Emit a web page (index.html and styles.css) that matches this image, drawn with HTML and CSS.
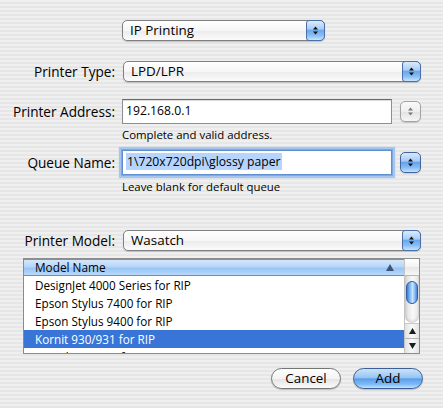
FILE: index.html
```html
<!DOCTYPE html>
<html>
<head>
<meta charset="utf-8">
<title>IP Printing</title>
<link rel="stylesheet" href="styles.css">
</head>
<body>
<div class="dialog">
  <div class="row r1">
    <div class="label"></div>
    <div class="popup popup-ip">
      <span class="popup-text">IP Printing</span>
      <span class="popup-btn"><svg class="arrows" width="5" height="9" viewBox="0 0 5 9"><path d="M2.5 0.5 L5 3.5 H0 Z M0 5.5 H5 L2.5 8.5 Z"/></svg></span>
    </div>
  </div>

  <div class="row r2">
    <div class="label">Printer Type:</div>
    <div class="popup popup-grow">
      <span class="popup-text">LPD/LPR</span>
      <span class="popup-btn"><svg class="arrows" width="5" height="9" viewBox="0 0 5 9"><path d="M2.5 0.5 L5 3.5 H0 Z M0 5.5 H5 L2.5 8.5 Z"/></svg></span>
    </div>
  </div>

  <div class="row r3">
    <div class="label">Printer Address:</div>
    <div class="field"><span class="field-text">192.168.0.1</span></div>
    <div class="stepper stepper-gray"><svg class="arrows" width="5" height="9" viewBox="0 0 5 9"><path d="M2.5 0.5 L5 3.5 H0 Z M0 5.5 H5 L2.5 8.5 Z"/></svg></div>
  </div>
  <div class="hint hint-1">Complete and valid address.</div>

  <div class="row r4">
    <div class="label">Queue Name:</div>
    <div class="field field-focus"><span class="field-text selected-text">1\720x720dpi\glossy paper</span></div>
    <div class="stepper stepper-blue"><svg class="arrows" width="5" height="9" viewBox="0 0 5 9"><path d="M2.5 0.5 L5 3.5 H0 Z M0 5.5 H5 L2.5 8.5 Z"/></svg></div>
  </div>
  <div class="hint hint-2">Leave blank for default queue</div>

  <div class="row r5">
    <div class="label">Printer Model:</div>
    <div class="popup popup-grow">
      <span class="popup-text">Wasatch</span>
      <span class="popup-btn"><svg class="arrows" width="5" height="9" viewBox="0 0 5 9"><path d="M2.5 0.5 L5 3.5 H0 Z M0 5.5 H5 L2.5 8.5 Z"/></svg></span>
    </div>
  </div>

  <div class="table">
    <div class="list">
      <div class="thead">
        <span class="thead-text">Model Name</span>
        <svg class="sort" width="8" height="7" viewBox="0 0 8 7"><path d="M4 0 L8 7 H0 Z"/></svg>
      </div>
      <div class="trow">DesignJet 4000 Series for RIP</div>
      <div class="trow">Epson Stylus 7400 for RIP</div>
      <div class="trow">Epson Stylus 9400 for RIP</div>
      <div class="trow trow-selected">Kornit 930/931 for RIP</div>
      <div class="trow">Mimaki JF-1631 for RIP</div>
    </div>
    <div class="scroll">
      <div class="scroll-corner"></div>
      <div class="scroll-track"><div class="scroll-thumb"></div></div>
      <div class="scroll-btn scroll-up"><svg width="7" height="6" viewBox="0 0 7 6"><path d="M3.5 0 L7 6 H0 Z"/></svg></div>
      <div class="scroll-btn scroll-down"><svg width="7" height="6" viewBox="0 0 7 6"><path d="M0 0 H7 L3.5 6 Z"/></svg></div>
    </div>
  </div>

  <div class="buttons">
    <div class="btn btn-cancel">Cancel</div>
    <div class="btn btn-default">Add</div>
  </div>
</div>
</body>
</html>
```

FILE: styles.css
```css
html, body {
  margin: 0;
  padding: 0;
  width: 443px;
  height: 408px;
  overflow: hidden;
}

body {
  font-family: "Open Sans", "Liberation Sans", sans-serif;
  font-size: 13px;
  color: #000;
  background: repeating-linear-gradient(to bottom, #efefef 0, #efefef 2px, #e6e6e6 2px, #e6e6e6 4px);
}

.dialog {
  display: flex;
  flex-direction: column;
  padding-top: 20px;
}

.row {
  display: flex;
  align-items: center;
  padding-right: 22px;
}

.label {
  width: 115px;
  flex: none;
  text-align: right;
  margin-right: 7px;
  font-size: 13.6px;
  line-height: 16px;
  white-space: nowrap;
}

.r2 { margin-top: 20px; }
.r3 { margin-top: 17px; }
.r4 { margin-top: 8px; }
.r5 { margin-top: 36px; }

/* Popup buttons */
.popup {
  height: 21px;
  box-sizing: border-box;
  border: 1px solid #808080;
  border-radius: 5px;
  background: linear-gradient(to bottom, #ffffff 0%, #f6f6f6 50%, #ebebeb 51%, #fbfbfb 100%);
  box-shadow: 0 1px 1px rgba(0, 0, 0, 0.18);
  display: flex;
  align-items: center;
}

.popup-ip { width: 203px; }
.popup-grow { flex: 1; margin-left: 1px; }

.popup-text {
  flex: 1;
  padding-left: 7px;
  font-size: 13.4px;
  line-height: 19px;
  white-space: nowrap;
}

.popup-btn {
  width: 19px;
  height: 21px;
  box-sizing: border-box;
  margin: -1px -1px -1px 0;
  border: 1px solid #4b6fa8;
  border-radius: 3px 5px 5px 3px;
  background: linear-gradient(to bottom, #dcebfc 0%, #a8cdf5 42%, #6aa7ec 50%, #86bdf5 75%, #c6e4ff 100%);
  display: flex;
  align-items: center;
  justify-content: center;
}

.arrows { fill: #111; display: block; }

/* Text fields */
.field {
  flex: 1;
  height: 25px;
  box-sizing: border-box;
  border: 1px solid #8e8e8e;
  border-top-color: #6a6a6a;
  background: #fff;
  box-shadow: inset 0 1px 1px rgba(0, 0, 0, 0.15);
  display: flex;
  align-items: flex-start;
  padding: 2px 0 0 3px;
}

.field-focus {
  border-color: #5f8fcf;
  box-shadow: 0 0 0 1px #7ea9e1, 0 0 1px 3px #a7c6ee;
}

.field-text {
  font-size: 12.2px;
  line-height: 17px;
  white-space: nowrap;
}

.selected-text {
  background: #b5d5ff;
  padding: 0 1px;
}

.stepper {
  width: 21px;
  height: 21px;
  box-sizing: border-box;
  margin-left: 8px;
  border-radius: 5px;
  display: flex;
  align-items: center;
  justify-content: center;
  flex: none;
  box-shadow: 0 1px 1px rgba(0, 0, 0, 0.15);
}

.stepper-gray {
  border: 1px solid #a3a3a3;
  background: linear-gradient(to bottom, #fafafa 0%, #eeeeee 50%, #e2e2e2 51%, #f5f5f5 100%);
}
.stepper-gray .arrows { fill: #7a7a7a; }

.stepper-blue {
  border: 1px solid #42679f;
  background: linear-gradient(to bottom, #d9e9fc 0%, #a7ccf5 42%, #66a3ea 50%, #84bbf4 75%, #c3e2ff 100%);
}

.hint {
  margin-left: 122px;
  font-size: 11.4px;
  line-height: 14px;
  white-space: nowrap;
}
.hint-1 { margin-top: 4px; }
.hint-2 { margin-top: 5px; }

/* Table */
.table {
  margin: 7px 0 0 23px;
  width: 397px;
  height: 96px;
  box-sizing: border-box;
  border: 1px solid #8c8c8c;
  background: #fff;
  display: flex;
  overflow: hidden;
}

.list {
  flex: 1;
  min-width: 0;
  overflow: hidden;
}

.thead {
  height: 17px;
  box-sizing: border-box;
  border-top: 1px solid #6b95cf;
  border-bottom: 1px solid #6c8fbf;
  background: linear-gradient(to bottom, #d4e7fb 0%, #b7d6f8 45%, #98c4f3 55%, #b9d9fb 100%);
  display: flex;
  align-items: center;
  padding: 0 10px 0 11px;
}

.thead-text {
  flex: 1;
  font-size: 11.8px;
  line-height: 15px;
}

.sort { fill: #3c5579; display: block; }

.trow {
  height: 18px;
  line-height: 18px;
  padding-left: 11px;
  font-size: 11.7px;
  white-space: nowrap;
}

.trow-selected {
  background: #3875d7;
  color: #fff;
}

/* Scroll bar */
.scroll {
  width: 15px;
  flex: none;
  display: flex;
  flex-direction: column;
  border-left: 1px solid #c4c4c4;
  box-sizing: border-box;
}

.scroll-corner {
  height: 17px;
  flex: none;
  box-sizing: border-box;
  border-bottom: 1px solid #b9b9b9;
  background: linear-gradient(to bottom, #ffffff 0%, #f3f3f3 50%, #e7e7e7 51%, #f7f7f7 100%);
}

.scroll-track {
  flex: 1;
  display: flex;
  flex-direction: column;
  align-items: center;
  background: linear-gradient(to right, #cfcfcf 0%, #e9e9e9 25%, #f9f9f9 55%, #ececec 85%, #d6d6d6 100%);
  border-radius: 0 0 7px 7px;
  box-shadow: inset 0 -3px 3px -1px rgba(0, 0, 0, 0.12);
}

.scroll-thumb {
  margin-top: 5px;
  width: 12px;
  height: 23px;
  box-sizing: border-box;
  border: 1px solid #2f5fa6;
  border-radius: 6px;
  background: linear-gradient(to right, #3f7ad2 0%, #83b9f2 30%, #c8e3fd 55%, #8fc2f6 75%, #4a84d8 100%);
}

.scroll-btn {
  height: 15px;
  flex: none;
  display: flex;
  align-items: center;
  justify-content: center;
  box-sizing: border-box;
  background: linear-gradient(to right, #e2e2e2 0%, #f8f8f8 50%, #e4e4e4 100%);
}
.scroll-btn svg { fill: #1c1c1c; display: block; }
.scroll-up { border-top: 1px solid #c9c9c9; }
.scroll-down { border-top: 1px solid #b4b4b4; }

/* Buttons */
.buttons {
  display: flex;
  justify-content: flex-end;
  gap: 12px;
  margin-top: 14px;
  padding-right: 20px;
}

.btn {
  width: 70px;
  height: 21px;
  box-sizing: border-box;
  border-radius: 10.5px;
  text-align: center;
  font-size: 13.4px;
  line-height: 19px;
  box-shadow: 0 1px 1px rgba(0, 0, 0, 0.2);
}

.btn-cancel {
  border: 1px solid #757575;
  background: linear-gradient(to bottom, #ffffff 0%, #f3f3f3 50%, #e3e3e3 51%, #fbfbfb 100%);
}

.btn-default {
  border: 1px solid #3c5e95;
  background: linear-gradient(to bottom, #cbe2fb 0%, #98c5f4 45%, #5c9de9 52%, #7cbaf5 80%, #bfe1ff 100%);
}
```
